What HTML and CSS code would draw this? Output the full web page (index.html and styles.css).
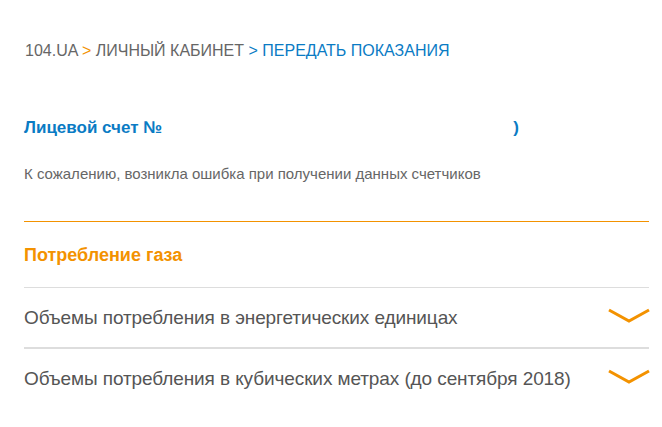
FILE: index.html
```html
<!DOCTYPE html>
<html lang="ru">
<head>
    <meta charset="UTF-8">
    <meta name="viewport" content="width=device-width, initial-scale=1.0">
    <title>Передать показания</title>
    <link rel="stylesheet" href="styles.css">
</head>
<body>
    <div class="container">
        <div class="breadcrumbs">
            <a href="#">104.UA</a>
            <span class="sep">&gt;</span>
            <a href="#">ЛИЧНЫЙ КАБИНЕТ</a>
            <span class="sep blue">&gt;</span>
            <span class="current">ПЕРЕДАТЬ ПОКАЗАНИЯ</span>
        </div>

        <div class="account">
            <h2 class="account-title">Лицевой счет №<span class="account-number"></span>)</h2>
            <p class="account-error">К сожалению, возникла ошибка при получении данных счетчиков</p>
        </div>

        <div class="consumption">
            <h3 class="consumption-title">Потребление газа</h3>

            <div class="acc-item">
                <span>Объемы потребления в энергетических единицах</span>
                <svg class="chevron" viewBox="0 0 42 16" width="42" height="16">
                    <polyline points="1,2 21,13 41,2" />
                </svg>
            </div>

            <div class="acc-item">
                <span>Объемы потребления в кубических метрах (до сентября 2018)</span>
                <svg class="chevron" viewBox="0 0 42 16" width="42" height="16">
                    <polyline points="1,2 21,13 41,2" />
                </svg>
            </div>
        </div>
    </div>
</body>
</html>
```

FILE: styles.css
```css
body{
    margin: 0;
    background-color: white;
    font-family: "Liberation Sans", Arial, sans-serif;
}

.container{
    padding: 41px 13px 0 24px;
}

.breadcrumbs{
    font-size: 16px;
    color: #666;
    padding-left: 1px;
    line-height: 20px;
}

.breadcrumbs a{
    color: #666;
    text-decoration: none;
}

.breadcrumbs .sep{
    color: #f39200;
}

.breadcrumbs .sep.blue,
.breadcrumbs .current{
    color: #0a7bc4;
}

.account{
    margin-top: 56px;
    padding-bottom: 37px;
    border-bottom: 1px solid #f39200;
}

.account-title{
    margin: 0;
    font-size: 17px;
    font-weight: bold;
    color: #0a7bc4;
    line-height: 22px;
}

.account-number{
    display: inline-block;
    width: 351px;
}

.account-error{
    margin: 25px 0 0;
    font-size: 15px;
    color: #666;
    line-height: 20px;
}

.consumption-title{
    margin: 0;
    padding: 22px 0 21px;
    font-size: 18px;
    font-weight: bold;
    color: #f39200;
    line-height: 22px;
    border-bottom: 1px solid #ddd;
}

.acc-item{
    display: flex;
    justify-content: space-between;
    align-items: center;
    height: 59px;
    font-size: 19px;
    letter-spacing: -0.1px;
    color: #555;
    border-bottom: 2px solid #ddd;
}

.acc-item:last-child{
    border-bottom: none;
}

.chevron{
    margin-right: -1px;
    margin-top: -3px;
}

.chevron polyline{
    fill: none;
    stroke: #f39200;
    stroke-width: 3;
}
```
